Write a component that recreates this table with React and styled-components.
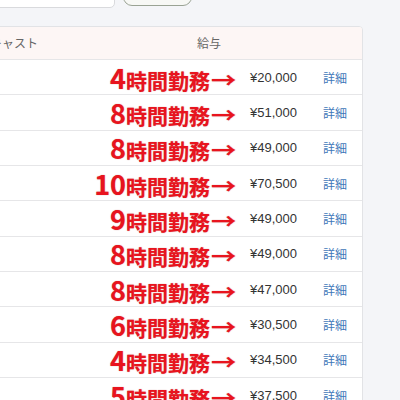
import React from "react";
import styled, { createGlobalStyle } from "styled-components";

const GlobalStyle = createGlobalStyle`
  body {
    margin: 0;
    background-color: #f4f5f8;
    font-family: "Noto Sans CJK JP", "Liberation Sans", sans-serif;
    overflow: hidden;
  }
`;

const shifts = [
  { hours: 4, pay: "¥20,000" },
  { hours: 8, pay: "¥51,000" },
  { hours: 8, pay: "¥49,000" },
  { hours: 10, pay: "¥70,500" },
  { hours: 9, pay: "¥49,000" },
  { hours: 8, pay: "¥49,000" },
  { hours: 8, pay: "¥47,000" },
  { hours: 6, pay: "¥30,500" },
  { hours: 4, pay: "¥34,500" },
  { hours: 5, pay: "¥37,500" },
];

const App = () => {
  return (
    <>
      <GlobalStyle />
      <Page lang="ja">
        <Toolbar>
          <SearchInput />
          <SearchBtn />
        </Toolbar>
        <Card>
          <HeadRow>
            <HeadCell>キャスト</HeadCell>
            <HeadCell>給与</HeadCell>
          </HeadRow>
          {shifts.map((s, i) => {
            return (
              <Row key={i}>
                <Hours>
                  <Num>{s.hours}</Num>時間勤務<Arrow>→</Arrow>
                </Hours>
                <Pay>{s.pay}</Pay>
                <Detail>詳細</Detail>
              </Row>
            );
          })}
        </Card>
      </Page>
    </>
  );
};

export default App;

const Page = styled.div`
  margin-left: -60px;
  width: 423px;
`;

const Toolbar = styled.div`
  display: flex;
  align-items: flex-start;
  gap: 8px;
  margin-top: -30px;
`;

const SearchInput = styled.div`
  width: 175px;
  height: 38px;
  box-sizing: border-box;
  background-color: #fff;
  border: 1px solid #d9dadd;
  border-radius: 5px;
`;

const SearchBtn = styled.div`
  width: 69px;
  height: 36px;
  box-sizing: border-box;
  background-color: #f7f8f5;
  border: 1px solid #9aa394;
  border-radius: 9px;
`;

const Card = styled.div`
  margin-top: 18px;
  background-color: #fff;
  border: 1px solid #e2e3e6;
  border-radius: 4px;
  overflow: hidden;
`;

const HeadRow = styled.div`
  display: grid;
  grid-template-columns: 256px 1fr;
  height: 33px;
  box-sizing: border-box;
  align-items: center;
  background-color: #fdf6f5;
  border-bottom: 1px solid #e6e6e8;
  & > :first-child {
    padding-left: 49px;
  }
`;

const HeadCell = styled.div`
  font-size: 12px;
  color: #666;
  padding-bottom: 2px;
`;

const Row = styled.div`
  display: grid;
  grid-template-columns: 296px 86px 1fr;
  align-items: center;
  height: 35.33px;
  box-sizing: border-box;
  border-bottom: 1px solid #e6e6e8;
`;

const Hours = styled.div`
  text-align: right;
  padding-right: 2px;
  color: #e8141e;
  font-family: "Noto Sans CJK JP", sans-serif;
  font-weight: 700;
  font-size: 21px;
  line-height: 1;
  text-shadow: 0 0 1px rgba(150, 0, 0, 0.5);
  white-space: nowrap;
`;

const Num = styled.span`
  font-size: 27px;
`;

const Arrow = styled.span`
  display: inline-block;
  width: 24px;
  margin-left: 1px;
  text-align: left;
  transform: translateY(-1px) scaleX(1.2);
  transform-origin: left center;
`;

const Pay = styled.div`
  padding-left: 13px;
  font-family: "Liberation Sans", Arial, sans-serif;
  font-size: 13px;
  color: #333;
`;

const Detail = styled.div`
  font-size: 12px;
  color: #3f77b9;
`;
